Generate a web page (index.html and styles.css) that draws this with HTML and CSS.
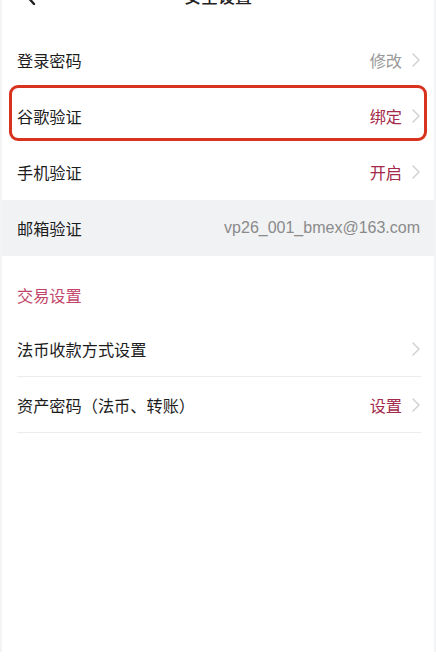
FILE: index.html
```html
<!DOCTYPE html>
<html lang="zh-CN">
<head>
  <meta charset="UTF-8" />
  <meta name="viewport" content="width=device-width, initial-scale=1" />
  <title>安全设置</title>
  <link rel="stylesheet" href="styles.css">
</head>
<body>
  <div class="page">
    <header class="nav">
      <svg class="nav-back" width="12" height="20" viewBox="0 0 12 20" aria-hidden="true">
        <path d="M10 1 L2 10 L10 19" fill="none" stroke="#222" stroke-width="2.4" stroke-linecap="round" stroke-linejoin="round"/>
      </svg>
      <h1 class="nav-title">安全设置</h1>
    </header>

    <ul class="list">
      <li class="row">
        <span class="row-label">登录密码</span>
        <span class="row-value muted">修改</span>
        <svg class="chev" width="8" height="14" viewBox="0 0 8 14"><path d="M1 1 L7 7 L1 13" /></svg>
      </li>
      <li class="row row-marked">
        <span class="row-label">谷歌验证</span>
        <span class="row-value accent">绑定</span>
        <svg class="chev" width="8" height="14" viewBox="0 0 8 14"><path d="M1 1 L7 7 L1 13" /></svg>
        <span class="mark"></span>
      </li>
      <li class="row">
        <span class="row-label">手机验证</span>
        <span class="row-value accent">开启</span>
        <svg class="chev" width="8" height="14" viewBox="0 0 8 14"><path d="M1 1 L7 7 L1 13" /></svg>
      </li>
      <li class="row row-static">
        <span class="row-label">邮箱验证</span>
        <span class="row-value email">vp26_001_bmex@163.com</span>
      </li>
    </ul>

    <h2 class="section-title">交易设置</h2>

    <ul class="list">
      <li class="row row-line">
        <span class="row-label">法币收款方式设置</span>
        <svg class="chev" width="8" height="14" viewBox="0 0 8 14"><path d="M1 1 L7 7 L1 13" /></svg>
      </li>
      <li class="row row-line">
        <span class="row-label">资产密码（法币、转账）</span>
        <span class="row-value accent">设置</span>
        <svg class="chev" width="8" height="14" viewBox="0 0 8 14"><path d="M1 1 L7 7 L1 13" /></svg>
      </li>
    </ul>
  </div>
</body>
</html>
```

FILE: styles.css
```css
* {
  box-sizing: border-box;
}
html, body {
  margin: 0;
  padding: 0;
  background: #fff;
  overflow: hidden;
}
body {
  font-family: "Liberation Sans", "Noto Sans CJK SC", sans-serif;
  color: #1c1c1c;
}
.page {
  height: 669px;
  border-left: 2px solid #f3f4f5;
  border-right: 2px solid #f3f4f5;
}
.nav {
  display: flex;
  align-items: center;
  justify-content: center;
  position: relative;
  height: 24px;
  margin-top: -17px;
  margin-bottom: 25px;
}
.nav-back {
  position: absolute;
  left: 22px;
  top: 2px;
}
.nav-title {
  margin: 0;
  font-size: 17px;
  font-weight: 500;
  color: #222;
}
.list {
  list-style: none;
  margin: 0;
  padding: 0;
}
.row {
  display: flex;
  align-items: center;
  height: 56px;
  padding: 0 14px 0 15px;
  font-size: 16.2px;
  position: relative;
}
.row-label {
  flex: 1;
  color: #1c1c1c;
}
.row-value {
  margin-right: 10px;
}
.muted {
  color: #9a9a9a;
}
.accent {
  color: #a32a4b;
}
.email {
  color: #8a8a8a;
  font-size: 16px;
  margin-right: 0;
}
.chev path {
  fill: none;
  stroke: #cfcfcf;
  stroke-width: 1.4;
  stroke-linecap: round;
  stroke-linejoin: round;
}
.row-static {
  background: #f1f2f4;
}
.row-line::after {
  content: "";
  position: absolute;
  left: 15px;
  right: 13px;
  bottom: 0;
  height: 1px;
  background: #ececec;
}
.mark {
  position: absolute;
  left: 7px;
  right: 7px;
  top: -3px;
  bottom: 3px;
  border: 3px solid #d8331f;
  border-radius: 9px;
  pointer-events: none;
}
.section-title {
  margin: 0;
  padding: 30px 15px 14px;
  font-size: 16.2px;
  line-height: 21px;
  font-weight: 400;
  color: #c2466b;
}
```
